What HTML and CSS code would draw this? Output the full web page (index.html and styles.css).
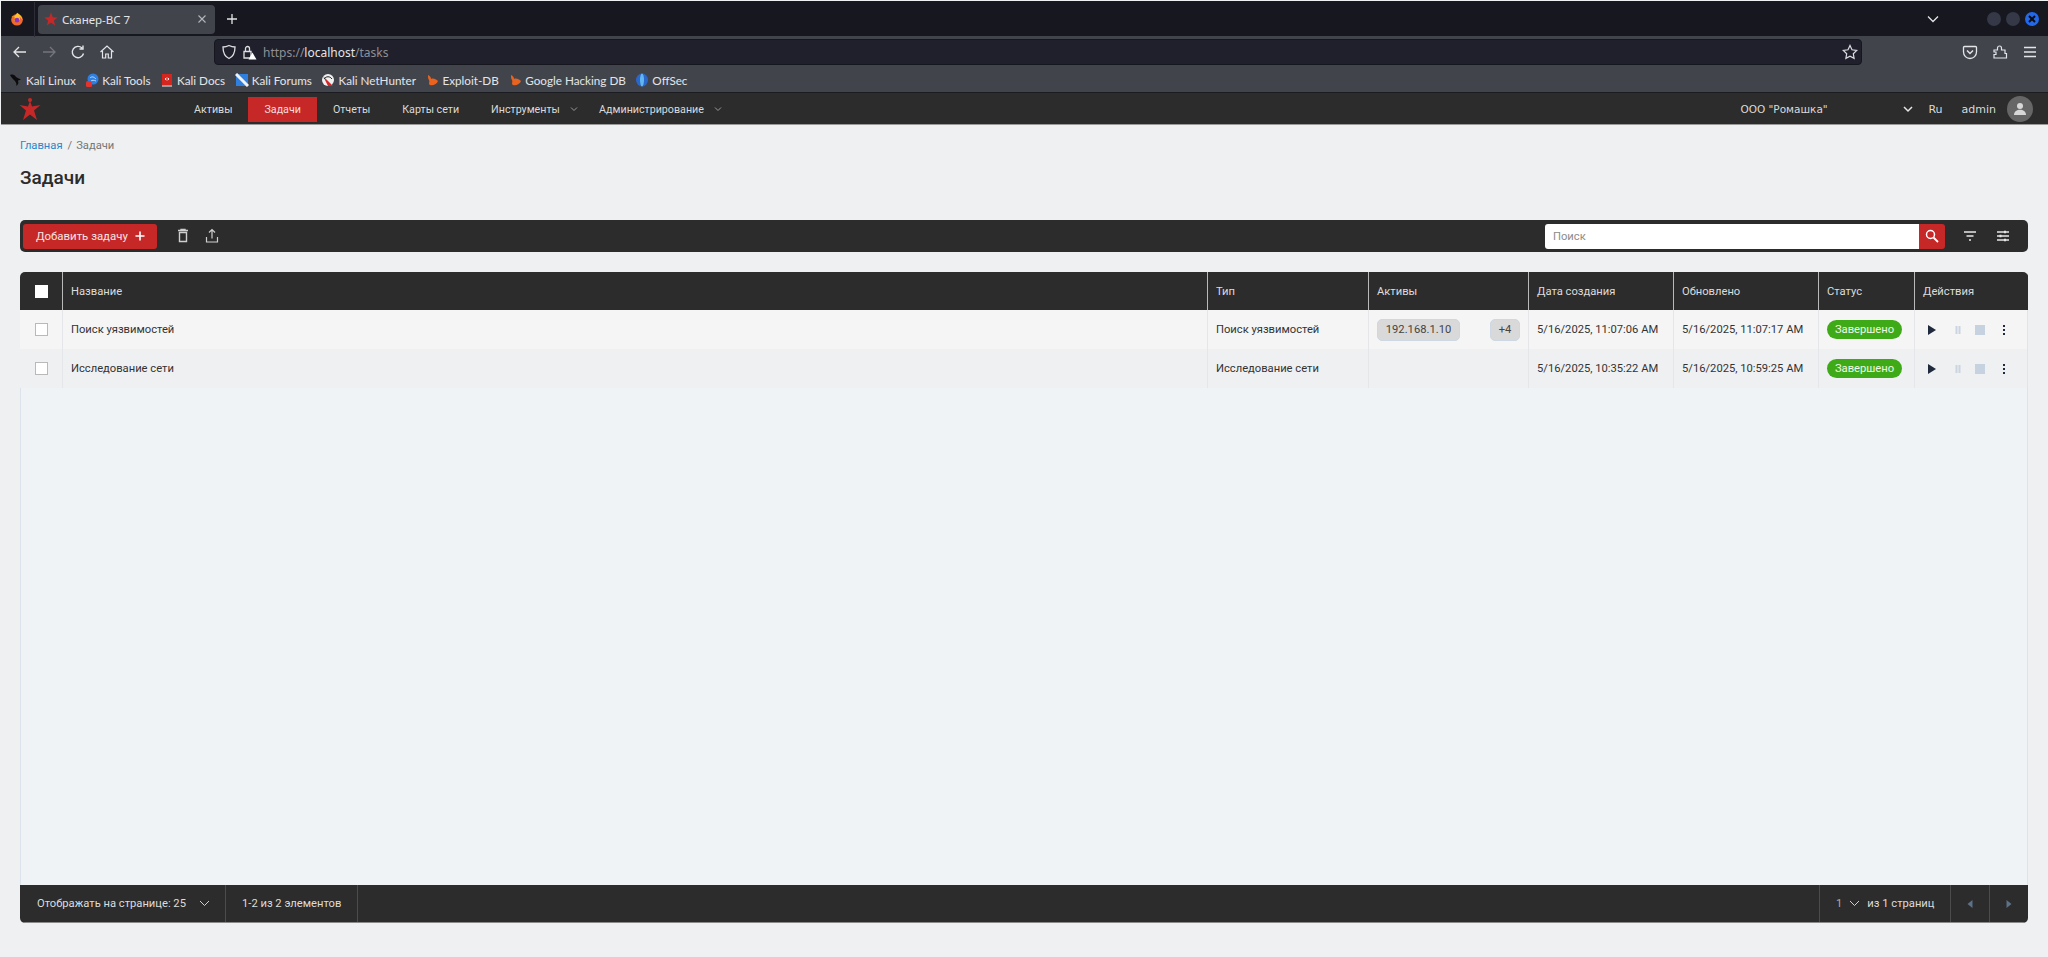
FILE: index.html
```html
<!DOCTYPE html>
<html lang="ru">
<head>
<meta charset="utf-8">
<title>Сканер-ВС 7</title>
<link rel="stylesheet" href="styles.css">
</head>
<body>
<div class="browser">
  <div class="tabbar">
    <svg class="ff" width="14" height="14" viewBox="0 0 18 18"><circle cx="9" cy="10" r="7.500" fill="#f2682a"/><path d="M2 6C4 8 8 4 9 1c3 2 7 5 7 10-.5-2-2-4-4-5 1 2 1 5-1 6-3 1-6 0-6-2 1 .5 3 .5 4-.5-2 0-4-1-3-3 .5-1-3-1-4-.5z" fill="#ffc02e"/><circle cx="9" cy="10.500" r="3" fill="#8a35c4"/></svg>
    <span class="tab-sep"></span>
    <div class="tab">
      <svg class="tab-star" width="14" height="14" viewBox="0 0 24 24"><path d="M12 1l3 8 8.500.4-6.700 5.300 2.300 8.300-7.100-4.800L4.900 23l2.300-8.300L.5 9.400 9 9z" fill="#c62828"/></svg>
      <span class="tab-title">Сканер-ВС 7</span>
      <svg class="tab-x" width="10" height="10" viewBox="0 0 10 10"><path d="M1.500 1.500l7 7m0-7l-7 7" stroke="#b5b6bb" stroke-width="1.100" fill="none"/></svg>
    </div>
    <svg class="newtab" width="12" height="12" viewBox="0 0 12 12"><path d="M6 1v10M1 6h10" stroke="#e4e5e8" stroke-width="1.300" fill="none"/></svg>
    <svg class="tabs-list" width="12" height="8" viewBox="0 0 12 8"><path d="M1 1.500l5 5 5-5" stroke="#e4e5e8" stroke-width="1.300" fill="none"/></svg>
    <div class="winbtns">
      <span class="winbtn"></span>
      <span class="winbtn"></span>
      <span class="winbtn winbtn-close"><svg width="10" height="10" viewBox="0 0 10 10"><path d="M2 2l6 6m0-6l-6 6" stroke="#0b0d14" stroke-width="2" fill="none"/></svg></span>
    </div>
  </div>
  <div class="navbar">
    <div class="navbtns">
      <svg width="16" height="16" viewBox="0 0 16 16"><path d="M14 8H2.500M7 3L2 8l5 5" stroke="#e4e5e8" stroke-width="1.300" fill="none"/></svg>
      <svg width="16" height="16" viewBox="0 0 16 16"><path d="M2 8h11.500M9 3l5 5-5 5" stroke="#75767c" stroke-width="1.300" fill="none"/></svg>
      <svg width="16" height="16" viewBox="0 0 16 16"><path d="M13.500 9.500A5.700 5.700 0 1 1 12 4M13 1.500V5H9.500" stroke="#e4e5e8" stroke-width="1.400" fill="none"/></svg>
      <svg width="16" height="16" viewBox="0 0 16 16"><path d="M1.500 8L8 2l6.500 6M3.500 7v7h3.200v-4h2.600v4h3.200V7" stroke="#e4e5e8" stroke-width="1.200" fill="none"/></svg>
    </div>
    <div class="urlbar">
      <svg class="shield" width="16" height="16" viewBox="0 0 16 16"><path d="M8 1.500c2 1 4 1.500 6 1.500 0 5-1.500 9.500-6 11.500C3.500 12.500 2 8 2 3c2 0 4-.5 6-1.500z" stroke="#dcdde0" stroke-width="1.300" fill="none"/></svg>
      <svg class="lock" width="16" height="16" viewBox="0 0 16 16"><path d="M3 7.500h7v6.500H3zM4.500 7.500V4.500a2 2 0 0 1 4 0v3" stroke="#dcdde0" stroke-width="1.300" fill="none"/><path d="M11.500 8.500l4 7h-8z" fill="#fff"/></svg>
      <span class="url">https://<b>localhost</b>/tasks</span>
      <svg class="url-star" width="16" height="16" viewBox="0 0 16 16"><path d="M8 1.500l2 4.300 4.700.6-3.400 3.300.8 4.700L8 12.200l-4.100 2.200.8-4.700L1.300 6.400 6 5.800z" stroke="#dcdde0" stroke-width="1.200" fill="none"/></svg>
    </div>
    <div class="navright">
      <svg width="16" height="16" viewBox="0 0 16 16"><path d="M2.500 2.500h11a1 1 0 0 1 1 1v4.500a6.500 6.500 0 0 1-13 0V3.500a1 1 0 0 1 1-1z" stroke="#e4e5e8" stroke-width="1.300" fill="none"/><path d="M5 6.500l3 3 3-3" stroke="#e4e5e8" stroke-width="1.500" fill="none"/></svg>
      <svg width="16" height="16" viewBox="0 0 16 16"><path d="M2 6h3.500V4a2 2 0 0 1 4 0v2H13v3.500h1.500v4.500H2v-3.500h2V8H2z" stroke="#e4e5e8" stroke-width="1.200" fill="none"/></svg>
      <svg width="16" height="16" viewBox="0 0 16 16"><path d="M2 3.500h12M2 8h12M2 12.500h12" stroke="#e4e5e8" stroke-width="1.400" fill="none"/></svg>
    </div>
  </div>
  <div class="bookmarks">
    <a class="bm"><svg width="14" height="14" viewBox="0 0 14 14"><path d="M1 2c3-1 5 0 6 2 1 1 3 1 5 3-2 0-3 0-3 1 1 2 0 4-2 5 1-2 0-3-1-5-1-1-4-4-5-6z" fill="#0c0c0c"/></svg>Kali Linux</a>
    <a class="bm"><svg width="14" height="14" viewBox="0 0 14 14"><circle cx="8" cy="6" r="5.500" fill="#2f7fe0"/><path d="M5 5c2-2 4-1 6 1M6 8c1-1 3-1 5 0" stroke="#bcd9fa" fill="none"/><rect x="1" y="8" width="6" height="6" rx="1.500" fill="#e5322d"/></svg>Kali Tools</a>
    <a class="bm"><svg width="14" height="14" viewBox="0 0 14 14"><path d="M2 1h10v11H3a1 1 0 0 0-1 1z" fill="#d4261f"/><path d="M2 13h10" stroke="#f1f1f1"/><path d="M5 6l1.500-1M5 6l1.500 1M9 6L7.500 5M9 6L7.500 7" stroke="#fff" fill="none"/></svg>Kali Docs</a>
    <a class="bm"><svg width="14" height="14" viewBox="0 0 14 14"><rect x="1" y="1" width="12" height="12" fill="#2f7fe0"/><path d="M1 1l12 12" stroke="#f3f3f3" stroke-width="3"/></svg>Kali Forums</a>
    <a class="bm"><svg width="14" height="14" viewBox="0 0 14 14"><circle cx="7" cy="7" r="6" fill="#f0f0f0"/><path d="M2 3l10 10-5 0z" fill="#cf2a2a"/><path d="M3 6c2-3 6-3 8 0" stroke="#222" fill="none"/></svg>Kali NetHunter</a>
    <a class="bm"><svg width="14" height="14" viewBox="0 0 14 14"><path d="M3 2c2 1 3 2 3 4 2-1 5 0 7 2-1 3-5 5-8 4C3 11 5 9 4 7 3 6 3 4 3 2z" fill="#e9631f"/></svg>Exploit-DB</a>
    <a class="bm"><svg width="14" height="14" viewBox="0 0 14 14"><path d="M3 2c2 1 3 2 3 4 2-1 5 0 7 2-1 3-5 5-8 4C3 11 5 9 4 7 3 6 3 4 3 2z" fill="#e9631f"/></svg>Google Hacking DB</a>
    <a class="bm"><svg width="14" height="14" viewBox="0 0 14 14"><ellipse cx="7" cy="7" rx="6" ry="6.500" fill="#2b66c9"/><ellipse cx="7" cy="7" rx="2" ry="6.500" fill="#62b6ef"/></svg>OffSec</a>
  </div>
</div>

<header class="appbar">
  <svg class="logo" width="22" height="23" viewBox="0 0 22 23"><circle cx="11" cy="2" r="2" fill="#c62828"/><path d="M11 3l2 5.500L21.500 7 15 12.500 18 22l-7-5.500L4 22l3-9.500L.5 7 9 8.500z" fill="#c62828"/></svg>
  <nav class="appnav">
    <a class="nav-item">Активы</a>
    <a class="nav-item active">Задачи</a>
    <a class="nav-item">Отчеты</a>
    <a class="nav-item">Карты сети</a>
    <a class="nav-item has-sub">Инструменты<svg width="8" height="6" viewBox="0 0 8 6"><path d="M1 1.500l3 3 3-3" stroke="#9a9a9a" fill="none"/></svg></a>
    <a class="nav-item has-sub">Администрирование<svg width="8" height="6" viewBox="0 0 8 6"><path d="M1 1.500l3 3 3-3" stroke="#9a9a9a" fill="none"/></svg></a>
  </nav>
  <div class="org">ООО "Ромашка"<svg width="10" height="7" viewBox="0 0 10 7"><path d="M1 1l4 4 4-4" stroke="#e6e6e6" stroke-width="1.500" fill="none"/></svg></div>
  <span class="lang">Ru</span>
  <span class="user">admin</span>
  <span class="avatar"><svg width="14" height="14" viewBox="0 0 14 14"><circle cx="7" cy="4" r="3" fill="#d8d8d8"/><path d="M1 13c0-7 12-7 12 0z" fill="#d8d8d8"/></svg></span>
</header>

<main class="page">
  <div class="crumbs"><a class="crumb-link">Главная</a><span class="crumb-sep">/</span><span>Задачи</span></div>
  <h1 class="title">Задачи</h1>

  <div class="toolbar">
    <button class="add-btn">Добавить задачу<svg width="10" height="10" viewBox="0 0 10 10"><path d="M5 .5v9M.5 5h9" stroke="#fff" stroke-width="1.600" fill="none"/></svg></button>
    <svg class="tool-icon" width="14" height="16" viewBox="0 0 14 16"><path d="M3.500 4.500h7v9h-7zM2 2.500h10M5 2.500V1.500h4v1" stroke="#cfcfcf" stroke-width="1.400" fill="none"/></svg>
    <svg class="tool-icon" width="14" height="16" viewBox="0 0 14 16"><path d="M7 10.500V2M4 4.500L7 1.500l3 3M1.500 9v5h11V9" stroke="#cfcfcf" stroke-width="1.200" fill="none"/></svg>
    <div class="search">
      <input class="search-input" placeholder="Поиск">
      <span class="search-btn"><svg width="14" height="14" viewBox="0 0 14 14"><circle cx="5.500" cy="5.500" r="4" stroke="#fff" stroke-width="1.500" fill="none"/><path d="M8.500 8.500l4.500 4.500" stroke="#fff" stroke-width="1.800"/></svg></span>
    </div>
    <svg class="tool-right first" width="14" height="12" viewBox="0 0 14 12"><path d="M1 2h12M3.500 6h7M6 10h2" stroke="#e6e6e6" stroke-width="1.500" fill="none"/></svg>
    <svg class="tool-right" width="14" height="12" viewBox="0 0 14 12"><path d="M1 2h12M1 6h12M1 10h12" stroke="#e6e6e6" stroke-width="1.500" fill="none"/><path d="M8 .8h2v2.400H8zM3.500 4.800h2v2.400h-2zM8 8.800h2v2.400H8z" fill="#e6e6e6"/></svg>
  </div>

  <section class="grid">
    <div class="row head">
      <div class="cell check"><span class="box"></span></div>
      <div class="cell">Название</div>
      <div class="cell">Тип</div>
      <div class="cell">Активы</div>
      <div class="cell">Дата создания</div>
      <div class="cell">Обновлено</div>
      <div class="cell">Статус</div>
      <div class="cell">Действия</div>
    </div>
    <div class="row odd">
      <div class="cell check"><span class="box"></span></div>
      <div class="cell">Поиск уязвимостей</div>
      <div class="cell">Поиск уязвимостей</div>
      <div class="cell assets"><span class="chip">192.168.1.10</span><span class="chip more">+4</span></div>
      <div class="cell">5/16/2025, 11:07:06 AM</div>
      <div class="cell">5/16/2025, 11:07:17 AM</div>
      <div class="cell"><span class="status">Завершено</span></div>
      <div class="cell actions">
        <svg width="10" height="12" viewBox="0 0 10 12"><path d="M1 1v10l8-5z" fill="#1f2a3c"/></svg>
        <svg width="8" height="10" viewBox="0 0 8 10"><path d="M1.500 1h2v8h-2zM4.500 1h2v8h-2z" fill="#cbd5e1"/></svg>
        <svg width="10" height="10" viewBox="0 0 10 10"><rect width="10" height="10" fill="#c7d2e0"/></svg>
        <svg width="4" height="12" viewBox="0 0 4 12"><path d="M1 1h2v2H1zM1 5h2v2H1zM1 9h2v2H1z" fill="#1f2a3c"/></svg>
      </div>
    </div>
    <div class="row even">
      <div class="cell check"><span class="box"></span></div>
      <div class="cell">Исследование сети</div>
      <div class="cell">Исследование сети</div>
      <div class="cell"></div>
      <div class="cell">5/16/2025, 10:35:22 AM</div>
      <div class="cell">5/16/2025, 10:59:25 AM</div>
      <div class="cell"><span class="status">Завершено</span></div>
      <div class="cell actions">
        <svg width="10" height="12" viewBox="0 0 10 12"><path d="M1 1v10l8-5z" fill="#1f2a3c"/></svg>
        <svg width="8" height="10" viewBox="0 0 8 10"><path d="M1.500 1h2v8h-2zM4.500 1h2v8h-2z" fill="#cbd5e1"/></svg>
        <svg width="10" height="10" viewBox="0 0 10 10"><rect width="10" height="10" fill="#c7d2e0"/></svg>
        <svg width="4" height="12" viewBox="0 0 4 12"><path d="M1 1h2v2H1zM1 5h2v2H1zM1 9h2v2H1z" fill="#1f2a3c"/></svg>
      </div>
    </div>
    <div class="empty"></div>
    <footer class="pager">
      <div class="pg pg-size">Отображать на странице: 25<svg width="11" height="7" viewBox="0 0 11 7"><path d="M1 1l4.500 4.500L10 1" stroke="#d0d0d0" fill="none"/></svg></div>
      <div class="pg pg-count">1-2 из 2 элементов</div>
      <div class="pg pg-page"><span class="pg-num">1</span><svg width="11" height="7" viewBox="0 0 11 7"><path d="M1 1l4.500 4.500L10 1" stroke="#d0d0d0" fill="none"/></svg><span>из 1 страниц</span></div>
      <div class="pg pg-arrow"><svg width="6" height="8" viewBox="0 0 6 8"><path d="M5.500 0v8L.5 4z" fill="#5d7187"/></svg></div>
      <div class="pg pg-arrow"><svg width="6" height="8" viewBox="0 0 6 8"><path d="M.5 0v8l5-4z" fill="#5d7187"/></svg></div>
    </footer>
  </section>
</main>
</body>
</html>
```

FILE: styles.css
```css
* { box-sizing: border-box; }
html, body { margin: 0; height: 957px; overflow: hidden; }
body {
  display: flex;
  flex-direction: column;
  padding: 1px 0 0 1px;
  background: #eff0f2;
  font-family: Roboto, "Liberation Sans", sans-serif;
  font-size: 11.2px;
  color: #2c2c2c;
}
svg { display: block; flex: none; }

/* browser chrome */
.browser { flex: none; font-family: "Noto Sans", "Open Sans", sans-serif; color: #e4e5e8; }
.tabbar {
  height: 35px;
  background: #16171f;
  display: flex;
  align-items: center;
  padding-top: 1px;
}
.ff { margin-left: 9px; }
.tab-sep { width: 1px; height: 35px; margin-left: 10px; background: #2c2d36; }
.tab {
  width: 177px;
  height: 29px;
  margin: 0 0 0 3px;
  padding: 0 8px 0 6px;
  background: #42444c;
  border-radius: 4px;
  display: flex;
  align-items: center;
}
.tab-title { margin-left: 4px; font-size: 11.500px; flex: 1; }
.newtab { margin-left: 11px; }
.tabs-list { margin-left: auto; }
.winbtns { display: flex; gap: 5px; margin: 0 9px 0 48px; }
.winbtn { width: 14px; height: 14px; border-radius: 50%; background: #343847; display: flex; align-items: center; justify-content: center; }
.winbtn-close { background: #2268e8; }

.navbar {
  height: 32px;
  background: #42444c;
  display: flex;
  align-items: center;
}
.navbtns { display: flex; gap: 13px; margin-left: 11px; width: 202px; }
.urlbar {
  width: 1648px;
  height: 26px;
  background: #1f202b;
  border: 1px solid #15161e;
  border-radius: 4px;
  display: flex;
  align-items: center;
  padding: 0 3px 0 6px;
}
.lock { margin-left: 4px; }
.url { margin-left: 6px; font-size: 12px; color: #8f9096; flex: 1; }
.url b { font-weight: 400; color: #e4e5e8; }
.navright { display: flex; gap: 14px; margin-left: 100px; }

.bookmarks {
  height: 25px;
  background: #42444c;
  border-bottom: 1px solid #1b1c22;
  display: flex;
  align-items: center;
  padding-left: 8px;
  gap: 9.5px;
  font-family: Lato, "Noto Sans", sans-serif;
  font-size: 11.700px;
}
.bm { display: flex; align-items: center; gap: 3px; }

/* app header */
.appbar {
  flex: none;
  height: 32px;
  padding-top: 1px;
  background: #2c2c2c;
  color: #dadada;
  display: flex;
  align-items: center;
  font-size: 10.700px;
  border-bottom: 1px solid #9a9a9a;
}
.logo { margin-left: 18px; }
.appnav { display: flex; margin-left: 137px; height: 25px; }
.nav-item {
  padding: 0 16px;
  display: flex;
  align-items: center;
}
.nav-item.active { background: #c62828; color: #f5dede; }
.has-sub { padding-right: 0; width: 108px; gap: 10px; }
.has-sub + .has-sub { width: 146px; }
.org {
  margin-left: auto;
  width: 173px;
  font-family: "DejaVu Sans", sans-serif;
  display: flex;
  align-items: center;
  justify-content: space-between;
  font-size: 10.500px;
}
.lang { margin-left: 15px; font-family: "DejaVu Sans", sans-serif; font-size: 11px; }
.user { margin-left: 19px; font-family: "DejaVu Sans", sans-serif; font-size: 11px; }
.avatar {
  width: 26px;
  height: 26px;
  margin: 0 15px 0 11px;
  border-radius: 50%;
  background: #666;
  display: flex;
  align-items: center;
  justify-content: center;
}

/* page */
.page {
  flex: 1;
  min-height: 0;
  display: flex;
  flex-direction: column;
  padding: 11px 20px 34px 19px;
  border-top: 1px solid #fff0;
}
.crumbs { height: 16px; display: flex; align-items: center; color: #777; }
.crumb-link { color: #2b87c9; }
.crumb-sep { margin: 0 4px 0 5px; }
.title { margin: 13px 0 0; font-size: 19px; line-height: 24px; font-weight: 500; color: #2c2c2c; height: 54px; }
.toolbar {
  flex: none;
  height: 32px;
  background: #2c2c2c;
  border-radius: 5px;
  display: flex;
  align-items: center;
  padding: 0 18px 0 3px;
}
.add-btn {
  width: 134px;
  height: 25px;
  padding: 0 12px 0 13px;
  border: 0;
  border-radius: 3px;
  background: #c62828;
  color: #f8e4e4;
  font: 11.400px Roboto, sans-serif;
  display: flex;
  align-items: center;
  justify-content: space-between;
}
.tool-icon { margin-left: 15px; }
.tool-icon:first-of-type { margin-left: 19px; }
.search { margin-left: auto; display: flex; width: 400px; height: 25px; }
.search-input {
  flex: 1;
  min-width: 0;
  border: 0;
  border-radius: 3px 0 0 3px;
  padding: 0 8px;
  background: #fff;
  font: 11.200px Roboto, sans-serif;
}
.search-input::placeholder { color: #8c8c8c; }
.search-btn { width: 26px; background: #c62828; border-radius: 0 3px 3px 0; display: flex; align-items: center; justify-content: center; }
.tool-right { margin-left: 19px; }
.tool-right.first { margin-left: 18px; }

/* table */
.grid {
  flex: 1;
  min-height: 0;
  display: flex;
  flex-direction: column;
  margin-top: 20px;
  border-radius: 5px;
  overflow: hidden;
  background: #f0f3f6;
}
.row {
  flex: none;
  display: grid;
  grid-template-columns: 43px 1145px 161px 160px 145px 145px 96px 113px;
}
.cell {
  padding: 0 8px;
  display: flex;
  align-items: center;
  border-right: 1px solid #e4e6e9;
  min-width: 0;
  white-space: nowrap;
  color: #333;
}
.cell:last-child { border-right-color: #dfe5ec; }
.head { height: 38px; background: #2c2c2c; }
.head .cell { color: #dcdcdc; border-right-color: #b9b9b9; }
.head .cell:last-child { border-right-color: #2c2c2c; }
.odd { height: 39px; background: #f5f5f5; }
.even { height: 39px; background: #eff0f2; }
.check { justify-content: center; padding: 0; }
.box { width: 13px; height: 13px; background: #fff; border: 1px solid #b9b9b9; }
.head .box { border-color: #fff; }
.assets { justify-content: space-between; }
.chip { height: 22px; width: 83px; background: #d9d9d9; border: 1px solid #cdd8e4; border-radius: 5px; display: flex; align-items: center; justify-content: center; color: #444; }
.chip.more { width: 30px; }
.status { height: 19px; width: 75px; border-radius: 10px; background: #3faa18; color: #eef9e8; display: flex; align-items: center; justify-content: center; }
.actions { padding-left: 12px; gap: 0; }
.actions svg:nth-child(2) { margin-left: 17px; }
.actions svg:nth-child(3) { margin-left: 13px; }
.actions svg:nth-child(4) { margin-left: 17px; }
.empty { flex: 1; min-height: 0; border-left: 1px solid #dde3ea; border-right: 1px solid #dde3ea; }
.pager {
  flex: none;
  height: 38px;
  background: #2c2c2c;
  color: #dcdcdc;
  display: flex;
  border-bottom: 1px solid #8a8a8a;
}
.pg { height: 100%; display: flex; align-items: center; border-right: 1px solid #4c4c4c; }
.pg-size { width: 206px; padding-left: 17px; justify-content: space-between; padding-right: 15px; }
.pg-count { width: 132px; padding-left: 16px; }
.pg-page { margin-left: auto; width: 132px; border-left: 1px solid #4c4c4c; padding-left: 16px; gap: 7px; }
.pg-num { color: #aaa; }
.pg-arrow { width: 39px; justify-content: center; }
.pg-arrow:last-child { border-right: 0; width: 38px; }
```
